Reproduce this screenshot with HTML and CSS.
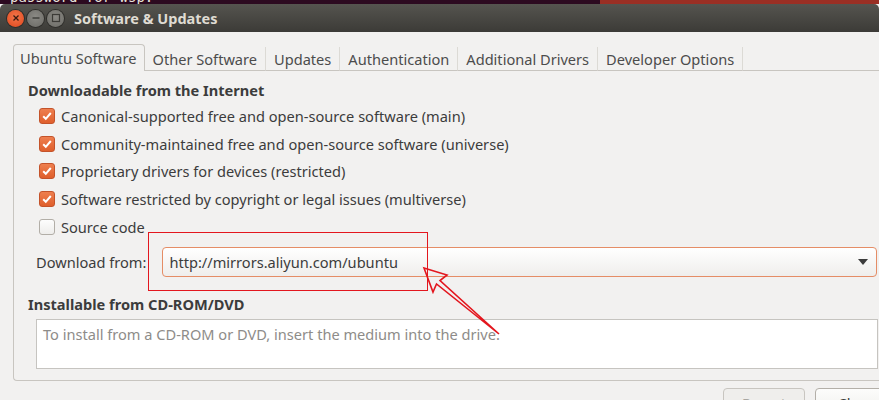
FILE: index.html
```html
<!DOCTYPE html>
<html>
<head>
<meta charset="utf-8">
<link rel="stylesheet" href="styles.css">
</head>
<body>
<div class="screen">
  <div class="topstrip">
    <div class="term"><span class="termtext">password for wsp:</span></div>
    <div class="redbar"></div>
  </div>
  <div class="titlebar">
    <div class="wbtns">
      <span class="wbtn close"><svg width="16" height="16" viewBox="0 0 16 16"><path d="M5.5 5.5 L10.5 10.5 M10.5 5.5 L5.5 10.5" stroke="#3a1a10" stroke-width="1.3"/></svg></span>
      <span class="wbtn"><svg width="16" height="16" viewBox="0 0 16 16"><path d="M4.5 8 H11.5" stroke="#3c3b37" stroke-width="1.4"/></svg></span>
      <span class="wbtn"><svg width="16" height="16" viewBox="0 0 16 16"><rect x="4.5" y="4.5" width="7" height="7" fill="none" stroke="#3c3b37" stroke-width="1.2"/></svg></span>
    </div>
    <div class="wtitle">Software &amp; Updates</div>
  </div>
  <div class="window">
    <div class="notebook">
      <div class="tabs">
        <div class="tab active">Ubuntu Software</div>
        <div class="tab">Other Software</div>
        <div class="tab">Updates</div>
        <div class="tab">Authentication</div>
        <div class="tab">Additional Drivers</div>
        <div class="tab">Developer Options</div>
        <div class="tabfill"></div>
      </div>
      <div class="page">
        <div class="heading">Downloadable from the Internet</div>
        <div class="checks">
          <div class="check"><span class="box on"><svg width="12" height="12" viewBox="0 0 12 12"><path d="M2.2 6.2 L4.8 8.8 L9.8 3" fill="none" stroke="#fff" stroke-width="2"/></svg></span>Canonical-supported free and open-source software (main)</div>
          <div class="check"><span class="box on"><svg width="12" height="12" viewBox="0 0 12 12"><path d="M2.2 6.2 L4.8 8.8 L9.8 3" fill="none" stroke="#fff" stroke-width="2"/></svg></span>Community-maintained free and open-source software (universe)</div>
          <div class="check"><span class="box on"><svg width="12" height="12" viewBox="0 0 12 12"><path d="M2.2 6.2 L4.8 8.8 L9.8 3" fill="none" stroke="#fff" stroke-width="2"/></svg></span>Proprietary drivers for devices (restricted)</div>
          <div class="check"><span class="box on"><svg width="12" height="12" viewBox="0 0 12 12"><path d="M2.2 6.2 L4.8 8.8 L9.8 3" fill="none" stroke="#fff" stroke-width="2"/></svg></span>Software restricted by copyright or legal issues (multiverse)</div>
          <div class="check"><span class="box"></span>Source code</div>
        </div>
        <div class="dlrow">
          <span class="dllabel">Download from:</span>
          <div class="combo">
            <span>http://mirrors.aliyun.com/ubuntu</span>
            <svg class="caret" width="10" height="6" viewBox="0 0 10 6"><path d="M0 0 H10 L5 6 Z" fill="#3c3c3c"/></svg>
          </div>
        </div>
        <div class="heading h2">Installable from CD-ROM/DVD</div>
        <div class="cdbox">To install from a CD-ROM or DVD, insert the medium into the drive.</div>
      </div>
    </div>
    <div class="buttons">
      <div class="btn disabled">Revert</div>
      <div class="btn">Close</div>
    </div>
  </div>
  <div class="redrect"></div>
  <svg class="arrow" width="879" height="400" viewBox="0 0 879 400">
    <polygon points="424,268 447,275 440,280.5 499,334 436.5,284 433,292" fill="none" stroke="#e3161e" stroke-width="1.6" stroke-linejoin="miter"/>
  </svg>
</div>
</body>
</html>
```

FILE: styles.css
```css
* { box-sizing: border-box; }
html, body { margin: 0; padding: 0; }
body {
  width: 879px;
  height: 400px;
  overflow: hidden;
  background: #f2f1f0;
  font-family: "Noto Sans", "DejaVu Sans", sans-serif;
  font-size: 14.6px;
  color: #3c3c3c;
}
.screen { position: relative; width: 879px; height: 400px; overflow: hidden; }
.topstrip { height: 4px; display: flex; overflow: hidden; }
.term { flex: 0 0 600px; background: #2c0a20; position: relative; overflow: hidden; }
.termtext {
  display: block;
  margin-top: -11px;
  margin-left: 10px;
  font-family: "DejaVu Sans Mono", monospace;
  font-size: 14px;
  color: #e8e4dc;
}
.redbar { flex: 1; background: #9a2f24; }
.titlebar {
  height: 28px;
  background: linear-gradient(#55544f, #3c3b37);
  border-radius: 5px 5px 0 0;
  display: flex;
  align-items: center;
  padding-left: 7px;
}
.wbtns { display: flex; gap: 3px; }
.wbtn {
  width: 17px; height: 17px;
  border-radius: 50%;
  background: radial-gradient(circle at 50% 40%, #8b8a85, #6b6a65);
  display: flex; align-items: center; justify-content: center;
  box-shadow: 0 0 0 1px #2f2e2b;
}
.wbtn.close { background: radial-gradient(circle at 50% 40%, #f4764a, #e0461c); }
.wtitle {
  margin-left: 10px;
  font-weight: bold;
  font-size: 14.5px;
  color: #dfdbd2;
}
.window { padding: 12px 0 0 13px; }
.notebook { width: 900px; }
.tabs { display: flex; align-items: flex-end; height: 27px; }
.tab {
  height: 24px;
  padding: 0 8px;
  display: flex; align-items: center;
  border-right: 1px solid #dcdad5;
  border-bottom: 1px solid #c8c5c0;
  color: #4c4c4c;
  white-space: nowrap;
}
.tab.active {
  height: 27px;
  padding: 0 7px 1px 6px;
  border: 1px solid #c8c5c0;
  border-bottom: none;
  border-radius: 4px 4px 0 0;
}
.tabfill { flex: 1; border-bottom: 1px solid #c8c5c0; height: 1px; }
.page {
  border-left: 1px solid #c8c5c0;
  border-bottom: 1px solid #c8c5c0;
  border-radius: 0 0 0 4px;
  padding: 9px 0 11px 14px;
}
.heading { font-weight: bold; height: 20px; line-height: 20px; }
.checks { padding: 6px 0 0 11px; display: flex; flex-direction: column; gap: 7.7px; }
.check { display: flex; align-items: center; height: 20px; gap: 6px; }
.box {
  width: 16px; height: 16px;
  border-radius: 3px;
  border: 1px solid #b2aea7;
  background: linear-gradient(#fdfdfd, #eeedeb);
  display: flex; align-items: center; justify-content: center;
}
.box.on {
  border-color: #c4532a;
  background: linear-gradient(#ee7f4f, #df5f2c);
}
.dlrow { display: flex; align-items: center; margin: 10px 0 0 8px; gap: 16px; }
.combo {
  flex-shrink: 0;
  width: 715px;
  height: 30px;
  border: 1px solid #e58d66;
  border-radius: 4px;
  background: linear-gradient(#ffffff, #efeeec);
  display: flex; align-items: center; justify-content: space-between;
  padding: 0 8px 0 6px;
}
.h2 { margin-top: 17px; }
.cdbox {
  margin: 5px 0 0 8px;
  width: 842px;
  height: 50px;
  background: #fff;
  border: 1px solid #c6c4c0;
  padding: 4px 6px;
  color: #8e8c89;
}
.buttons { display: flex; gap: 10px; margin: 7px 0 0 710px; width: 200px; }
.btn {
  flex-shrink: 0;
  width: 82px; height: 30px;
  border: 1px solid #b3afa8;
  border-radius: 4px;
  background: linear-gradient(#fcfcfb, #efeeec);
  text-align: center;
  line-height: 28px;
}
.btn.disabled { color: #a8a6a2; background: #efeeec; border-color: #c8c5c0; }
.redrect {
  position: absolute;
  left: 148px; top: 232px;
  width: 280px; height: 59px;
  border: 1px solid #e3161e;
}
.arrow { position: absolute; left: 0; top: 0; pointer-events: none; }
```
